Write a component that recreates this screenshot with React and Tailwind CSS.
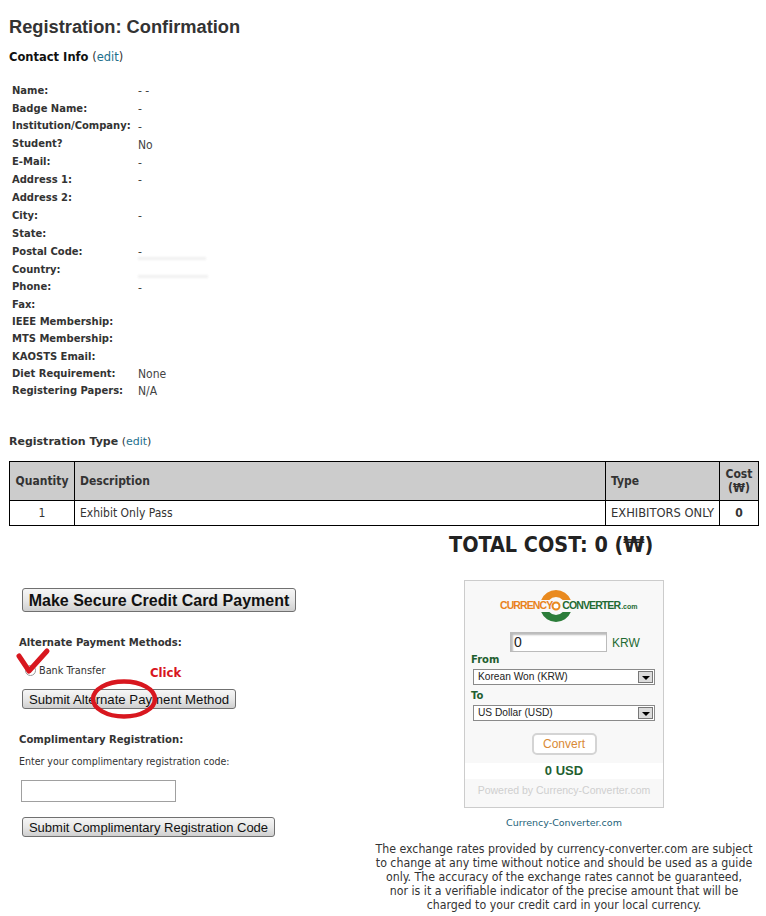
const CONTACT = [
  ['Name:', '- -'],
  ['Badge Name:', '-'],
  ['Institution/Company:', '-'],
  ['Student?', 'No'],
  ['E-Mail:', '-'],
  ['Address 1:', '-'],
  ['Address 2:', ''],
  ['City:', '-'],
  ['State:', ''],
  ['Postal Code:', '-'],
  ['Country:', ''],
  ['Phone:', '-'],
  ['Fax:', ''],
  ['IEEE Membership:', ''],
  ['MTS Membership:', ''],
  ['KAOSTS Email:', ''],
  ['Diet Requirement:', 'None'],
  ['Registering Papers:', 'N/A'],
];

const VERDANA = "font-['DejaVu_Sans',sans-serif]";
const TAHOMA = "font-['DejaVu_Sans_Condensed','DejaVu_Sans',sans-serif]";
const ARIAL = "font-['Liberation_Sans',Arial,sans-serif]";

function WinButton({ className, children }) {
  return (
    <button className={`block whitespace-nowrap rounded-[3px] border border-[#707070] bg-gradient-to-b from-[#f6f6f6] via-[#e8e8e8] to-[#cfcfcf] text-[#111] ${ARIAL} ${className}`}>
      {children}
    </button>
  );
}

function Select({ label }) {
  return (
    <div className="mx-[8px] flex h-[16px] items-center border border-[#8a8a8a] bg-white pl-[4px] pr-px">
      <span className={`flex-1 text-[10.2px] text-[#222] ${ARIAL}`}>{label}</span>
      <span className="flex h-[12px] w-[15px] items-center justify-center border border-[#777] bg-[#dcdcdc]">
        <span className="mt-[2px] h-0 w-0 border-x-[4px] border-t-[4px] border-x-transparent border-t-black" />
      </span>
    </div>
  );
}

function CurrencyWidget() {
  return (
    <div className="mx-auto flex h-[228px] w-[200px] flex-col border border-[#cccccc] bg-[#f8f8f8]">
      <div className="relative mt-[8px] flex h-[34px] items-center">
        <svg className="absolute left-[74px] top-0" width="34" height="34" viewBox="0 0 34 34">
          <path d="M2.2 11 A16 16 0 0 1 31.8 11 L23.7 11 A9 9 0 0 0 10.3 11 Z" fill="#e98a1f" />
          <path d="M2.2 23 A16 16 0 0 0 31.8 23 L23.7 23 A9 9 0 0 1 10.3 23 Z" fill="#2c7d3a" />
          <circle cx="17" cy="17" r="3.5" fill="#fff" stroke="#e98a1f" strokeWidth="2" />
        </svg>
        <span className={`relative ml-[35px] flex items-baseline whitespace-nowrap text-[10.5px] font-bold tracking-[-0.9px] ${ARIAL}`}>
          <span className="text-[#e9821c]">CURRENCY</span>
          <span className="w-[10px]" />
          <span className="text-[#1f6b33]">CONVERTER</span>
          <span className="ml-px text-[7px] tracking-normal text-[#1f6b33]">.com</span>
        </span>
      </div>
      <div className="mt-[9px] flex h-[20px] items-center pl-[45px]">
        <div className={`flex h-[20px] w-[97px] items-center border border-[#bbbbbb] bg-white pl-[3px] text-[14px] leading-none text-[#222] shadow-[inset_2px_2px_2px_#bbb] ${ARIAL}`}>0</div>
        <span className={`ml-[5px] mt-[3px] text-[12px] text-[#1f6b33] ${ARIAL}`}>KRW</span>
      </div>
      <p className={`ml-[6px] mt-px text-[10px] font-bold leading-[13px] text-[#1f5f30] ${VERDANA}`}>From</p>
      <div className="mt-[3px]">
        <Select label="Korean Won (KRW)" />
      </div>
      <p className={`ml-[6px] mt-[4px] text-[10px] font-bold leading-[13px] text-[#1f5f30] ${VERDANA}`}>To</p>
      <div className="mt-[3px]">
        <Select label="US Dollar (USD)" />
      </div>
      <button className={`mx-auto mt-[12px] block h-[22px] w-[65px] rounded-[5px] border-2 border-[#d4d4d4] bg-white text-[12px] text-[#d98a35] ${ARIAL}`}>
        Convert
      </button>
      <div className={`mt-[8px] h-[16px] bg-white text-center text-[13px] font-bold leading-[16px] text-[#1f5f30] ${ARIAL}`}>0 USD</div>
      <p className={`mt-[4px] text-center text-[10.5px] leading-[14px] text-[#cfcfcf] ${ARIAL}`}>Powered by Currency-Converter.com</p>
    </div>
  );
}

export default function App() {
  return (
    <div className={`relative h-[916px] w-[766px] overflow-hidden bg-white text-[#333] ${VERDANA}`}>
      <div className="px-[9px] pt-[16px]">
        <h1 className={`text-[18.25px] font-bold leading-[21px] text-[#333] ${ARIAL}`}>Registration: Confirmation</h1>
        <p className="mt-[13px] text-[11.5px] leading-[14px]">
          <b className="text-[#111]">Contact Info</b> <span className="text-[#333]">(<a className="text-[#1d6f8c]">edit</a>)</span>
        </p>

        {/* contact rows */}
        <div className="mt-[18px] pl-[3px]">
          {CONTACT.map(([k, v], i) => (
            <div key={k} className={`flex items-center ${i < 12 ? 'h-[17.9px]' : 'h-[17.2px]'}`}>
              <span className={`w-[126px] shrink-0 whitespace-nowrap text-[11.1px] font-bold text-[#333] ${TAHOMA}`}>{k}</span>
              <span className={`text-[12px] text-[#444] ${TAHOMA}`}>{v}</span>
            </div>
          ))}
        </div>

        <p className="mt-[35px] text-[11px] leading-[14px]">
          <b className="text-[#333]">Registration Type</b> <span className="text-[#333]">(<a className="text-[#1d6f8c]">edit</a>)</span>
        </p>

        <table className={`mt-[12px] w-[749px] table-fixed border-collapse border border-black text-[12px] text-[#333] ${TAHOMA}`}>
          <colgroup>
            <col className="w-[65px]" />
            <col className="w-[531px]" />
            <col className="w-[114px]" />
            <col className="w-[39px]" />
          </colgroup>
          <thead>
            <tr className="h-[39px] bg-[#cccccc] font-bold">
              <th className="border border-black text-center">Quantity</th>
              <th className="border border-black pl-[5px] text-left">Description</th>
              <th className="border border-black pl-[5px] text-left">Type</th>
              <th className="border border-black text-center leading-[14px]">Cost<br />(₩)</th>
            </tr>
          </thead>
          <tbody>
            <tr className="h-[25px]">
              <td className="border border-black text-center">1</td>
              <td className="border border-black pl-[5px]">Exhibit Only Pass</td>
              <td className="whitespace-nowrap border border-black pl-[5px] text-[12.8px]">EXHIBITORS ONLY</td>
              <td className="border border-black text-center font-bold">0</td>
            </tr>
          </tbody>
        </table>

        <p className={`mt-[5px] whitespace-nowrap pl-[440px] text-[21.4px] font-bold leading-[28px] text-[#222] ${TAHOMA}`}>TOTAL COST: 0 (₩)</p>
      </div>

      <div className="mt-[21px] flex">
        <div className="w-[366px] pl-[19px] pt-[8px]">
          <WinButton className="ml-[3px] h-[24px] w-[274px] pb-[2px] text-[16px] font-bold">Make Secure Credit Card Payment</WinButton>
          <p className={`mt-[24px] text-[11.2px] font-bold leading-[14px] ${TAHOMA}`}>Alternate Payment Methods:</p>
          <label className={`mt-[14px] flex h-[14px] items-center text-[10.8px] text-[#333] ${TAHOMA}`}>
            <span className="ml-[6px] mr-[3px] h-[11px] w-[11px] rounded-full border border-[#999] bg-white" />
            Bank Transfer
          </label>
          <WinButton className="ml-[3px] mt-[11px] h-[20px] w-[214px] text-[13.2px]">Submit Alternate Payment Method</WinButton>
          <p className={`mt-[24px] text-[11.2px] font-bold leading-[14px] ${TAHOMA}`}>Complimentary Registration:</p>
          <p className={`mt-[7px] text-[10.5px] leading-[14px] text-[#333] ${TAHOMA}`}>Enter your complimentary registration code:</p>
          <div className="ml-[2px] mt-[12px] h-[22px] w-[155px] border border-[#a0a0a0] bg-white" />
          <WinButton className="ml-[3px] mt-[15px] h-[20px] w-[253px] text-[13px]">Submit Complimentary Registration Code</WinButton>
        </div>
        <div className="w-[396px]">
          <CurrencyWidget />
          <p className={`mt-[8px] text-center text-[9.5px] leading-[13px] text-[#1d5f78] ${VERDANA}`}>Currency-Converter.com</p>
          <p className={`mt-[13px] whitespace-nowrap text-center text-[12.25px] leading-[14px] text-[#333] ${TAHOMA}`}>
            The exchange rates provided by currency-converter.com are subject<br />
            to change at any time without notice and should be used as a guide<br />
            only. The accuracy of the exchange rates cannot be guaranteed,<br />
            nor is it a verifiable indicator of the precise amount that will be<br />
            charged to your credit card in your local currency.
          </p>
        </div>
      </div>

      {/* blurred-out values */}
      <div className="absolute left-[138px] top-[257px] h-[3px] w-[68px] bg-[#f0f0f0] blur-[1px]" />
      <div className="absolute left-[138px] top-[275px] h-[3px] w-[70px] bg-[#f0f0f0] blur-[1px]" />

      {/* red annotations pasted on top */}
      <svg className="absolute left-[15px] top-[645px]" width="40" height="36" viewBox="0 0 40 36" fill="none">
        <path d="M4 11 L14 26 L32 6" stroke="#d8171f" strokeWidth="5" strokeLinecap="round" strokeLinejoin="round" />
      </svg>
      <svg className="absolute left-[88px] top-[676px]" width="74" height="46" viewBox="0 0 74 46" fill="none">
        <ellipse cx="36" cy="23" rx="31" ry="17.5" stroke="#d8171f" strokeWidth="4.5" />
      </svg>
      <span className={`absolute left-[150px] top-[665px] text-[13px] font-bold leading-[16px] text-[#d8171f] ${TAHOMA}`}>Click</span>
    </div>
  );
}
